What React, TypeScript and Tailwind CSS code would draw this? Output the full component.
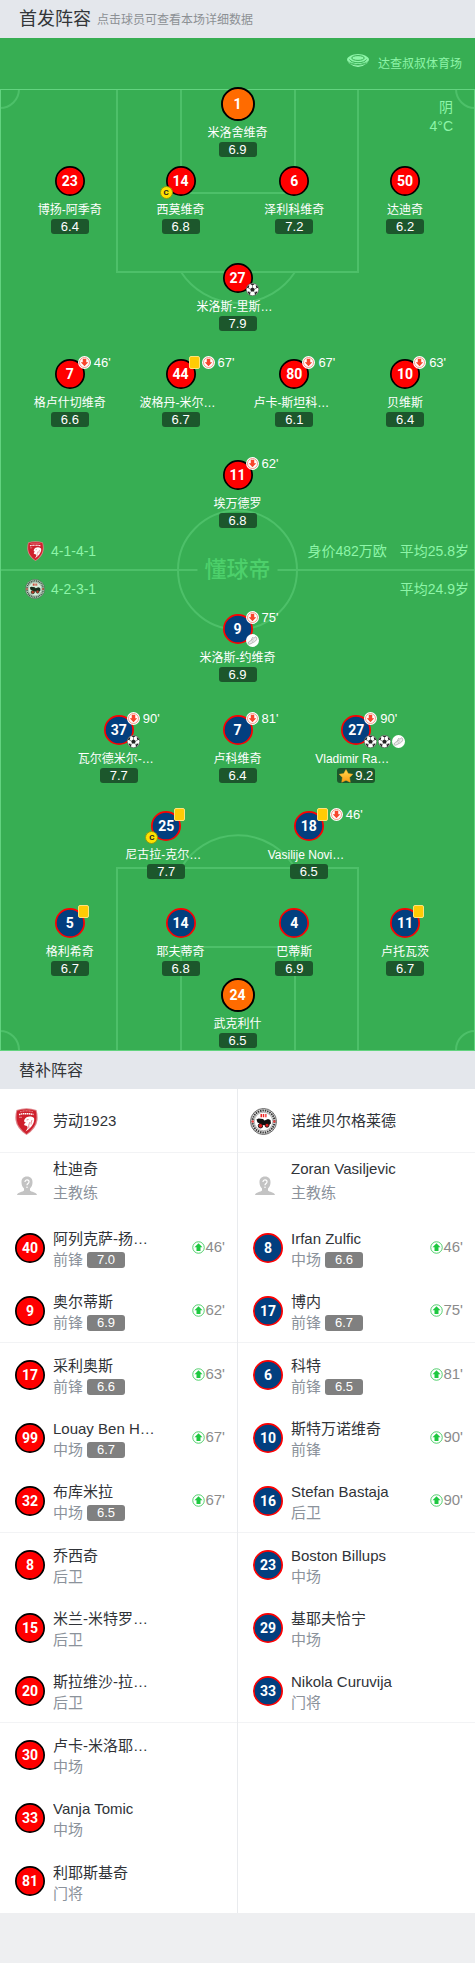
import React from "react";

type Kind = "home" | "away" | "keeper";
type Player = {
  no: number;
  name: string;
  rating: string;
  card?: boolean;
  off?: string;
  extras?: ("goal" | "assist")[];
  captain?: boolean;
  star?: boolean;
};
type Sub = { no: number; name: string; role: string; rating?: string; on?: string };

const discSize: Record<Kind, string> = {
  home: "size-[30px]",
  away: "size-[30px]",
  keeper: "size-[34px] -my-0.5",
};

const discPaint: Record<Kind, string> = {
  home: "fill-[#ff0000] stroke-black",
  away: "fill-[#023f7f] stroke-[#ff0000]",
  keeper: "fill-[#ff6b00] stroke-black",
};

function Disc({ no, kind }: { no: number; kind: Kind }) {
  return (
    <span
      className={`${discSize[kind]} relative flex shrink-0 items-center justify-center font-[Roboto,sans-serif] text-[14px] leading-none font-bold text-white`}
    >
      <svg viewBox="0 0 60 60" className="absolute inset-0 size-full" aria-hidden="true">
        <circle cx="30" cy="30" r="28.300" strokeWidth="3.400" className={discPaint[kind]} />
      </svg>
      <span className="relative">{no}</span>
    </span>
  );
}

function SubOff() {
  return (
    <svg viewBox="0 0 26 26" className="size-[13px] shrink-0" aria-hidden="true">
      <circle cx="13" cy="13" r="13" fill="#fff" />
      <circle cx="13" cy="13" r="10" fill="none" stroke="#f0705c" strokeWidth="1.400" />
      <path d="M9.500 5.500h7v7H20.500L13 20.500 5.500 12.500h4z" fill="#f8452c" />
    </svg>
  );
}

function SubOn() {
  return (
    <svg viewBox="0 0 26 26" className="size-[13px] shrink-0" aria-hidden="true">
      <circle cx="13" cy="13" r="11.500" fill="#fff" stroke="#3fc95e" strokeWidth="1.800" />
      <path d="M13 4.500 21 12.500h-4v7.500H9v-7.500H5z" fill="#1ec840" />
    </svg>
  );
}

function Ball() {
  return (
    <svg viewBox="0 0 26 26" className="size-[13px] shrink-0" aria-hidden="true">
      <circle cx="13" cy="13" r="12.500" fill="#fff" stroke="#333" strokeWidth="1" />
      <path
        d="M13 8.500l4.600 3.300-1.700 5.400h-5.800l-1.700-5.400zM8.500 2.200 13 4.800l4.500-2.600A12 12 0 0 0 8.500 2.200zM1.500 9.500 5 10.500 6.800 5 4 5.200zM24.500 9.500 21 10.500 19.200 5 22 5.200zM2.500 17.500 6.500 17l2.500 5-1.500 1.800zM23.500 17.500l-4-.5-2.500 5 1.500 1.800z"
        fill="#222"
      />
      <path d="M13 4.500v4M5 10.500l3.500 1.300M21 10.500l-3.500 1.300M10 17l-2 3M16 17l2 3" stroke="#444" strokeWidth="1.200" />
    </svg>
  );
}

function Boot() {
  return (
    <svg viewBox="0 0 26 26" className="size-[13px] shrink-0" aria-hidden="true">
      <circle cx="13" cy="13" r="13" fill="#fff" />
      <path
        d="M4 18c1-3 4-3.500 6-5l3-6c2 1.500 4 1 6.500-1.500 2 2 2.500 4 1.500 6-2 3.500-6 5-9 6.500-2.500 1.500-5 3-7 2-1-.5-1.300-1-1-2z"
        fill="#ececec"
        stroke="#8d8d8d"
        strokeWidth="1.200"
      />
      <path d="M10.500 13l3 2M12 10.500l3.500 2" stroke="#999" strokeWidth="1" />
    </svg>
  );
}

function Star() {
  return (
    <svg viewBox="0 0 28 28" className="size-3.5 shrink-0" aria-hidden="true">
      <defs>
        <linearGradient id="gold" x1="0" y1="0" x2="0" y2="1">
          <stop offset="0" stopColor="#ffdc50" />
          <stop offset="1" stopColor="#fb9a10" />
        </linearGradient>
      </defs>
      <path
        d="M14 1l4.500 8.200 9 1.300-6.300 6.700 1.300 9.300L14 22.500l-8.500 4 1.300-9.300L.5 10.500l9-1.300z"
        fill="url(#gold)"
        stroke="#f9ab22"
        strokeWidth="1"
        strokeLinejoin="round"
      />
    </svg>
  );
}

function RedCrest({ className }: { className: string }) {
  return (
    <svg viewBox="0 0 46 54" className={className} aria-hidden="true">
      <path d="M3 4Q23-3 43 4q3 10 2 20-2 17-22 30Q3 41 1 24 0 14 3 4z" fill="#dc8187" />
      <path d="M4.500 5.500q18.500-6 37 0 2 9 1 18.500-2 15-19.500 28Q5.500 39 3.500 24q-1-9.500 1-18.500z" fill="#cf1f2c" />
      <path d="M10 7.500q13-3.500 26 0" fill="none" stroke="#f3c9cb" strokeWidth="1.500" strokeDasharray="2 1" />
      <path d="M8 13q15-3.500 29 0" fill="none" stroke="#fff" strokeWidth="3" strokeDasharray="3 1" />
      <path
        d="M38 20c-7-5-16-3-19 3-2 4 0 6 3 6-4 2-5 5-2 6 4 0 6 2 5 6l-4 6c6-3 12-9 15-15 2-4 3-8 2-12z"
        fill="#fff"
      />
      <path d="M23 24l4-1M30 28c-3 5-3 9-2 13M34 24c-1 3-2 6-2 9" stroke="#cf1f2c" strokeWidth="1" fill="none" />
      <path d="M8 18.500h6" stroke="#f6d4d6" strokeWidth="1.200" />
    </svg>
  );
}

function RoundCrest({ className }: { className: string }) {
  return (
    <svg viewBox="0 0 54 54" className={className} aria-hidden="true">
      <circle cx="27" cy="27" r="26" fill="#e4e4e4" stroke="#5a5a5a" strokeWidth="1.800" />
      <circle cx="27" cy="27" r="22" fill="none" stroke="#3a3a3a" strokeWidth="4" strokeDasharray="3 1.800" />
      <circle cx="27" cy="27" r="18.500" fill="#fff" stroke="#777" strokeWidth="1" />
      <path d="M21 12h3v6.500h-3zM25.500 12h3v6.500h-3zM30.500 12h2.500v6.500h-2.500z" fill="#ee2524" />
      <path d="M13 23l4-2 9 1 3 3 7-3 5 2 1 7-4 3-4-3-4 3h-6l-4-3-5-2z" fill="#111" />
      <circle cx="21" cy="35.500" r="4.500" fill="#e01f1f" stroke="#111" strokeWidth="1.800" />
      <circle cx="34" cy="34.500" r="4" fill="#e01f1f" stroke="#111" strokeWidth="1.800" />
      <circle cx="5.500" cy="27" r="2.500" fill="#ee4544" />
      <circle cx="48.500" cy="27" r="2.500" fill="#ee4544" />
    </svg>
  );
}

function Stadium() {
  return (
    <svg viewBox="0 0 44 26" className="mb-1.5 h-[13px] w-[22px]" aria-hidden="true">
      <path d="M0 12l3 6 10 6 9 2 9-2 10-6 3-6-9 7-13 3-13-3z" fill="#9df7b4" />
      <path d="M22 0c11 0 22 6 22 11 0 4-11 9-22 9S0 15 0 11C0 6 11 0 22 0z" fill="#8df5a8" />
      <path d="M5 11c2 4 9 6.500 17 6.500S37 15 39 11" fill="none" stroke="#37ae53" strokeWidth="2" />
      <ellipse cx="22" cy="8" rx="12.500" ry="4.800" fill="none" stroke="#37ae53" strokeWidth="2" />
      <path d="M1 15c5 5 13 7 21 7s16-2 21-7" fill="none" stroke="#37ae53" strokeWidth="1.600" />
    </svg>
  );
}

function Silhouette() {
  return (
    <svg viewBox="0 0 40 40" className="mt-0.5 ml-0.5 size-5 shrink-0" aria-hidden="true">
      <path
        d="M20 1c7.500 0 11.500 5 11 12 0 5-2 9-5 12v4c2 3 13 3 14 9H0c1-6 12-6 14-9v-4c-3-3-5-7-5-12C8.500 6 12.500 1 20 1z"
        fill="#c3c3c3"
      />
      <path d="M16 12c0-6 9-5 8 0-.5 3-4 3-4 6.500" fill="none" stroke="#fff" strokeWidth="2.500" />
      <circle cx="20" cy="22.500" r="1.600" fill="#fff" />
    </svg>
  );
}

function PitchPlayer({ p, kind }: { p: Player; kind: Kind }) {
  return (
    <button type="button" className="flex w-[84px] flex-col items-center justify-self-center">
      <span className="relative flex">
        <Disc no={p.no} kind={kind} />
        {(p.card || p.off) && (
          <span className="absolute -top-[3px] left-[23px] flex items-center gap-0.5">
            {p.card && <span className="h-[13px] w-[11px] rounded-[2px] border border-[#ffe27a] bg-[#ffcb05]" />}
            {p.off && (
              <>
                <SubOff />
                <span className="pl-px text-[13px] leading-[13px] text-white">{p.off}</span>
              </>
            )}
          </span>
        )}
        {p.extras && (
          <span className="absolute top-5 left-[23px] flex gap-px">
            {p.extras.map((e, i) => (e === "goal" ? <Ball key={i} /> : <Boot key={i} />))}
          </span>
        )}
        {p.captain && (
          <span className="absolute top-5 -left-[6px] flex size-[13px] items-center justify-center rounded-full border border-[#8f9a10] bg-[#ffe100] font-[Roboto,sans-serif] text-[8px] leading-none font-bold text-[#222]">
            C
          </span>
        )}
      </span>
      <span className={`mt-[5px] h-[18px] text-[12px] leading-[18px] whitespace-nowrap text-white ${p.name.endsWith("…") ? "w-full pl-px text-left" : ""}`}>
        {p.name}
      </span>
      <span className="flex h-[15px] w-[38px] items-center justify-center rounded-[3px] bg-[#1c572c] text-[13px] leading-[15px] text-white">
        {p.star && <Star />}
        <span className={p.star ? "pl-0.5" : ""}>{p.rating}</span>
      </span>
    </button>
  );
}

const lineups = {
  1: "grid-cols-1",
  2: "grid-cols-2 px-[20%]",
  3: "grid-cols-3 px-[12.5%]",
  4: "grid-cols-[107fr_113fr_113fr_107fr] px-4",
} as Record<number, string>;

function Line({ players, kind, gap }: { players: Player[]; kind: Kind; gap: string }) {
  return (
    <div className={`relative grid ${lineups[players.length]} ${gap}`}>
      {players.map((p) => (
        <PitchPlayer key={p.no} p={p} kind={kind} />
      ))}
    </div>
  );
}

function Markings() {
  return (
    <svg viewBox="0 0 475 1013" preserveAspectRatio="none" className="absolute inset-0 size-full" fill="none" aria-hidden="true">
      <g stroke="#4dc069" strokeWidth="2">
        <path d="M117 51v183h241V51M181 51v104h114V51M181 234a68 68 0 0 0 114 0" />
        <path d="M117 1012V830h241v182M181 1012V909h114v103M181 830a66 66 0 0 1 114 0" />
        <circle cx="237.500" cy="532" r="59.500" />
        <path d="M0 532h197.500M277.500 532H475" />
        <path d="M19 51a19 19 0 0 1-19 19M456 51a19 19 0 0 0 19 19M0 993a19 19 0 0 1 19 19M475 993a19 19 0 0 0-19 19" />
      </g>
      <rect x="0.500" y="51.500" width="474" height="961" stroke="#62d37f" />
    </svg>
  );
}

function TeamInfo({ crest, formation, facts }: { crest: React.ReactNode; formation: string; facts: string[] }) {
  return (
    <div className="relative flex h-[38px] items-center pr-1.5 pl-[25px] text-[14px] text-[#8df5a8]">
      <span className="flex w-[26px] items-center">{crest}</span>
      <span className="grow">{formation}</span>
      <span className="flex gap-[13px]">
        {facts.map((f) => (
          <span key={f}>{f}</span>
        ))}
      </span>
    </div>
  );
}

function SubRow({ s, kind }: { s: Sub; kind: Kind }) {
  return (
    <button type="button" className="flex min-w-0 items-center pr-3 pl-[15px] text-left">
      <Disc no={s.no} kind={kind} />
      <span className="flex min-w-0 grow flex-col pt-1 pl-2">
        <span className="truncate text-[15px] leading-5 text-[#303338]">{s.name}</span>
        <span className="flex h-[21px] items-center gap-1 text-[15px] leading-[21px] text-[#8b929b]">
          {s.role}
          {s.rating && (
            <span className="h-4 w-[38px] rounded-[3px] bg-[#808080] text-center text-[13px] leading-4 text-white">{s.rating}</span>
          )}
        </span>
      </span>
      {s.on && (
        <span className="flex items-center text-[15px] text-[#8b8b8b]">
          <SubOn />
          {s.on}
        </span>
      )}
    </button>
  );
}

function Bench({ crest, team, coach, subs, kind }: { crest: React.ReactNode; team: string; coach: string; subs: Sub[]; kind: Kind }) {
  const groups = [subs.slice(0, 2), subs.slice(2, 5), subs.slice(5, 8), subs.slice(8, 11)];
  return (
    <div className="flex min-w-0 flex-1 flex-col">
      <h3 className="flex h-16 items-center border-b border-[#f2f3f5] pt-px pl-[13px] text-[15px] text-[#303338]">
        <span className="flex w-10 items-center">{crest}</span>
        {team}
      </h3>
      {groups.map((g, i) => (
        <div key={i} className={`grid h-[190px] grid-rows-3 ${i < 3 ? "border-b border-[#f2f3f5]" : ""}`}>
          {i === 0 && (
            <div className="flex items-center pl-[15px]">
              <Silhouette />
              <span className="flex flex-col pb-[7px] pl-4">
                <span className="text-[15px] leading-6 text-[#303338]">{coach}</span>
                <span className="text-[15px] leading-6 text-[#8b929b]">主教练</span>
              </span>
            </div>
          )}
          {g.map((s) => (
            <SubRow key={s.no} s={s} kind={kind} />
          ))}
        </div>
      ))}
    </div>
  );
}

const homeSubs: Sub[] = [
  { no: 40, name: "阿列克萨-扬…", role: "前锋", rating: "7.0", on: "46'" },
  { no: 9, name: "奥尔蒂斯", role: "前锋", rating: "6.9", on: "62'" },
  { no: 17, name: "采利奥斯", role: "前锋", rating: "6.6", on: "63'" },
  { no: 99, name: "Louay Ben H…", role: "中场", rating: "6.7", on: "67'" },
  { no: 32, name: "布库米拉", role: "中场", rating: "6.5", on: "67'" },
  { no: 8, name: "乔西奇", role: "后卫" },
  { no: 15, name: "米兰-米特罗…", role: "后卫" },
  { no: 20, name: "斯拉维沙-拉…", role: "后卫" },
  { no: 30, name: "卢卡-米洛耶…", role: "中场" },
  { no: 33, name: "Vanja Tomic", role: "中场" },
  { no: 81, name: "利耶斯基奇", role: "门将" },
];

const awaySubs: Sub[] = [
  { no: 8, name: "Irfan Zulfic", role: "中场", rating: "6.6", on: "46'" },
  { no: 17, name: "博内", role: "前锋", rating: "6.7", on: "75'" },
  { no: 6, name: "科特", role: "前锋", rating: "6.5", on: "81'" },
  { no: 10, name: "斯特万诺维奇", role: "前锋", on: "90'" },
  { no: 16, name: "Stefan Bastaja", role: "后卫", on: "90'" },
  { no: 23, name: "Boston Billups", role: "中场" },
  { no: 29, name: "基耶夫恰宁", role: "中场" },
  { no: 33, name: "Nikola Curuvija", role: "门将" },
];

export default function App() {
  return (
    <main lang="zh-CN" className="min-h-screen bg-[#eeeff1] font-['Liberation_Sans','Noto_Sans_CJK_SC',sans-serif]">
      <header className="flex h-[38px] items-center gap-1.5 bg-[#e4e7ec] pt-px pl-[19px]">
        <h1 className="text-[18px] text-[#333639]">首发阵容</h1>
        <p className="text-[12px] text-[#8c9094]">点击球员可查看本场详细数据</p>
      </header>

      <section className="relative bg-[#37ae53] pb-[3px]">
        <Markings />
        <span className="absolute top-[532px] left-1/2 -translate-x-1/2 -translate-y-1/2 text-[22px] leading-none font-medium whitespace-nowrap text-[#4dd06b]">
          懂球帝
        </span>
        <div className="relative flex h-[51px] items-center justify-end gap-[9px] pr-[13px] text-[12px] text-[#8df5a8]">
          <Stadium />
          达查叔叔体育场
        </div>
        <div className="absolute top-[60px] right-[22px] text-right text-[14px] leading-[19px] text-[#8df5a8]">
          <p>阴</p>
          <p>4°C</p>
        </div>
        <Line kind="keeper" gap="" players={[{ no: 1, name: "米洛舍维奇", rating: "6.9" }]} />
        <Line
          kind="home"
          gap="mt-[9px]"
          players={[
            { no: 23, name: "博扬-阿季奇", rating: "6.4" },
            { no: 14, name: "西莫维奇", rating: "6.8", captain: true },
            { no: 6, name: "泽利科维奇", rating: "7.2" },
            { no: 50, name: "达迪奇", rating: "6.2" },
          ]}
        />
        <Line kind="home" gap="mt-[29px]" players={[{ no: 27, name: "米洛斯-里斯…", rating: "7.9", extras: ["goal"] }]} />
        <Line
          kind="home"
          gap="mt-7"
          players={[
            { no: 7, name: "格卢什切维奇", rating: "6.6", off: "46'" },
            { no: 44, name: "波格丹-米尔…", rating: "6.7", card: true, off: "67'" },
            { no: 80, name: "卢卡-斯坦科…", rating: "6.1", off: "67'" },
            { no: 10, name: "贝维斯", rating: "6.4", off: "63'" },
          ]}
        />
        <Line kind="home" gap="mt-[33px]" players={[{ no: 11, name: "埃万德罗", rating: "6.8", off: "62'" }]} />
        <div className="pt-1 pb-1.5">
          <TeamInfo crest={<RedCrest className="ml-0.5 h-5 w-[17px]" />} formation="4-1-4-1" facts={["身价482万欧", "平均25.8岁"]} />
          <TeamInfo crest={<RoundCrest className="size-5 opacity-80" />} formation="4-2-3-1" facts={["平均24.9岁"]} />
        </div>
        <Line kind="away" gap="" players={[{ no: 9, name: "米洛斯-约维奇", rating: "6.9", off: "75'", extras: ["assist"] }]} />
        <Line
          kind="away"
          gap="mt-[33px]"
          players={[
            { no: 37, name: "瓦尔德米尔-…", rating: "7.7", off: "90'", extras: ["goal"] },
            { no: 7, name: "卢科维奇", rating: "6.4", off: "81'" },
            { no: 27, name: "Vladimir Ra…", rating: "9.2", off: "90'", extras: ["goal", "goal", "assist"], star: true },
          ]}
        />
        <Line
          kind="away"
          gap="mt-7"
          players={[
            { no: 25, name: "尼古拉-克尔…", rating: "7.7", card: true, captain: true },
            { no: 18, name: "Vasilije Novi…", rating: "6.5", card: true, off: "46'" },
          ]}
        />
        <Line
          kind="away"
          gap="mt-[29px]"
          players={[
            { no: 5, name: "格利希奇", rating: "6.7", card: true },
            { no: 14, name: "耶夫蒂奇", rating: "6.8" },
            { no: 4, name: "巴蒂斯", rating: "6.9" },
            { no: 11, name: "卢托瓦茨", rating: "6.7", card: true },
          ]}
        />
        <Line kind="keeper" gap="mt-1" players={[{ no: 24, name: "武克利什", rating: "6.5" }]} />
      </section>

      <section>
        <h2 className="flex h-[38px] items-center bg-[#e4e7ec] pt-px pl-[19px] text-[16px] text-[#333639]">替补阵容</h2>
        <div className="flex divide-x divide-[#e9ebee] bg-white">
          <Bench kind="home" team="劳动1923" coach="杜迪奇" subs={homeSubs} crest={<RedCrest className="ml-0.5 h-[27px] w-[23px]" />} />
          <Bench kind="away" team="诺维贝尔格莱德" coach="Zoran Vasiljevic" subs={awaySubs} crest={<RoundCrest className="-ml-px size-[27px]" />} />
        </div>
      </section>
    </main>
  );
}
